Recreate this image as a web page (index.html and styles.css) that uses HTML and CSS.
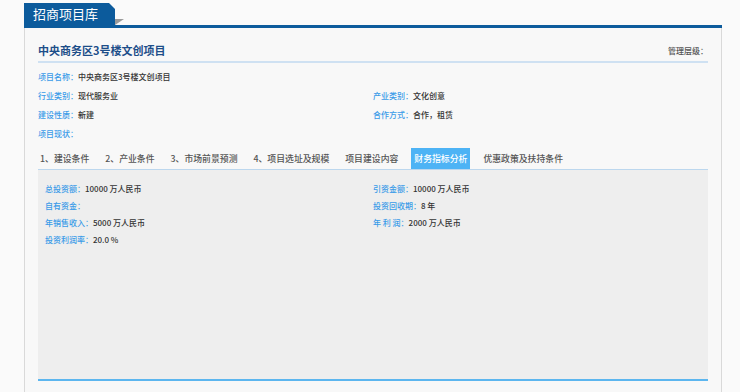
FILE: index.html
```html
<!DOCTYPE html>
<html lang="zh-CN">
<head>
    <meta charset="UTF-8">
    <title>招商项目库</title>
    <link rel="stylesheet" href="styles.css">
</head>
<body>
    <div class="page">
        <div class="header">
            <div class="header-tab">招商项目库</div>
            <div class="header-fold"></div>
        </div>

        <div class="container">
            <div class="title-bar">
                <h1 class="title">中央商务区3号楼文创项目</h1>
                <span class="level">管理层级：</span>
            </div>

            <div class="info">
                <div class="row">
                    <div class="field"><span class="label">项目名称：</span>中央商务区3号楼文创项目</div>
                </div>
                <div class="row">
                    <div class="field half"><span class="label">行业类别：</span>现代服务业</div>
                    <div class="field half"><span class="label">产业类别：</span>文化创意</div>
                </div>
                <div class="row">
                    <div class="field half"><span class="label">建设性质：</span>新建</div>
                    <div class="field half"><span class="label">合作方式：</span>合作，租赁</div>
                </div>
                <div class="row">
                    <div class="field"><span class="label">项目现状：</span></div>
                </div>
            </div>

            <ul class="tabs">
                <li class="tab">1、建设条件</li>
                <li class="tab">2、产业条件</li>
                <li class="tab">3、市场前景预测</li>
                <li class="tab">4、项目选址及规模</li>
                <li class="tab">项目建设内容</li>
                <li class="tab active">财务指标分析</li>
                <li class="tab">优惠政策及扶持条件</li>
            </ul>

            <div class="panel">
                <div class="row">
                    <div class="field half"><span class="label">总投资额：</span>10000 万人民币</div>
                    <div class="field half"><span class="label">引资金额：</span>10000 万人民币</div>
                </div>
                <div class="row">
                    <div class="field half"><span class="label">自有资金：</span></div>
                    <div class="field half"><span class="label">投资回收期：</span>8 年</div>
                </div>
                <div class="row">
                    <div class="field half"><span class="label">年销售收入：</span>5000 万人民币</div>
                    <div class="field half"><span class="label">年 利 润：</span>2000 万人民币</div>
                </div>
                <div class="row">
                    <div class="field half"><span class="label">投资利润率：</span>20.0 %</div>
                </div>
            </div>
        </div>
    </div>
</body>
</html>
```

FILE: styles.css
```css
    body {
        margin: 0;
        background: #fafafa;
        font-family: "Noto Sans CJK SC", "Noto Sans", sans-serif;
        color: #333;
    }

    .page {
        width: 698px;
        margin-left: 24px;
        padding-top: 3px;
    }

    /* Top header with tab */
    .header {
        display: flex;
        align-items: flex-end;
        height: 22px;
        border-bottom: 3px solid #0c5b9c;
    }

    .header-tab {
        width: 91px;
        height: 22px;
        line-height: 22px;
        padding-left: 9px;
        box-sizing: border-box;
        background: #0c5b9c;
        color: #fff;
        font-size: 13px;
        clip-path: polygon(0 0, 85px 0, 91px 6px, 91px 100%, 0 100%);
    }

    .header-fold {
        width: 9px;
        height: 6px;
        background: #9a9a9a;
        clip-path: polygon(0 0, 100% 0, 0 100%);
    }

    .container {
        background: #f8f8f8;
        border-left: 1px solid #d9d9d9;
        border-right: 1px solid #d9d9d9;
        padding: 0 13px 20px;
    }

    .title-bar {
        display: flex;
        justify-content: space-between;
        align-items: center;
        padding-top: 12px;
        padding-bottom: 1px;
        border-bottom: 2px solid #cfe1f2;
    }

    .title {
        margin: 0;
        font-size: 11px;
        line-height: 20px;
        font-weight: bold;
        color: #1d4e89;
    }

    .level {
        font-size: 8px;
        font-weight: 500;
        color: #555;
    }

    .info {
        padding-top: 4px;
    }

    .row {
        display: flex;
        font-size: 8px;
        font-weight: 500;
        line-height: 19px;
        height: 19px;
    }

    .field {
        white-space: nowrap;
    }

    .half {
        width: 50%;
    }

    .label {
        color: #3a9be8;
    }

    /* Tabs */
    .tabs {
        display: flex;
        list-style: none;
        margin: 5px 0 0;
        padding: 0;
        gap: 10px;
    }

    .tab {
        height: 21px;
        line-height: 21px;
        padding: 0 3px;
        font-size: 8.85px;
        font-weight: 500;
        color: #555;
    }

    .tab:first-child {
        margin-left: -1px;
    }

    .tab.active {
        background: #4db3f5;
        color: #fff;
    }

    .panel {
        height: 199px;
        padding: 10px 7px 0;
        background: #eeeeee;
        border-top: 1px solid #bcd7ee;
        border-bottom: 2px solid #5cb6ef;
    }

    .panel .row {
        line-height: 17px;
        height: 17px;
    }
```
